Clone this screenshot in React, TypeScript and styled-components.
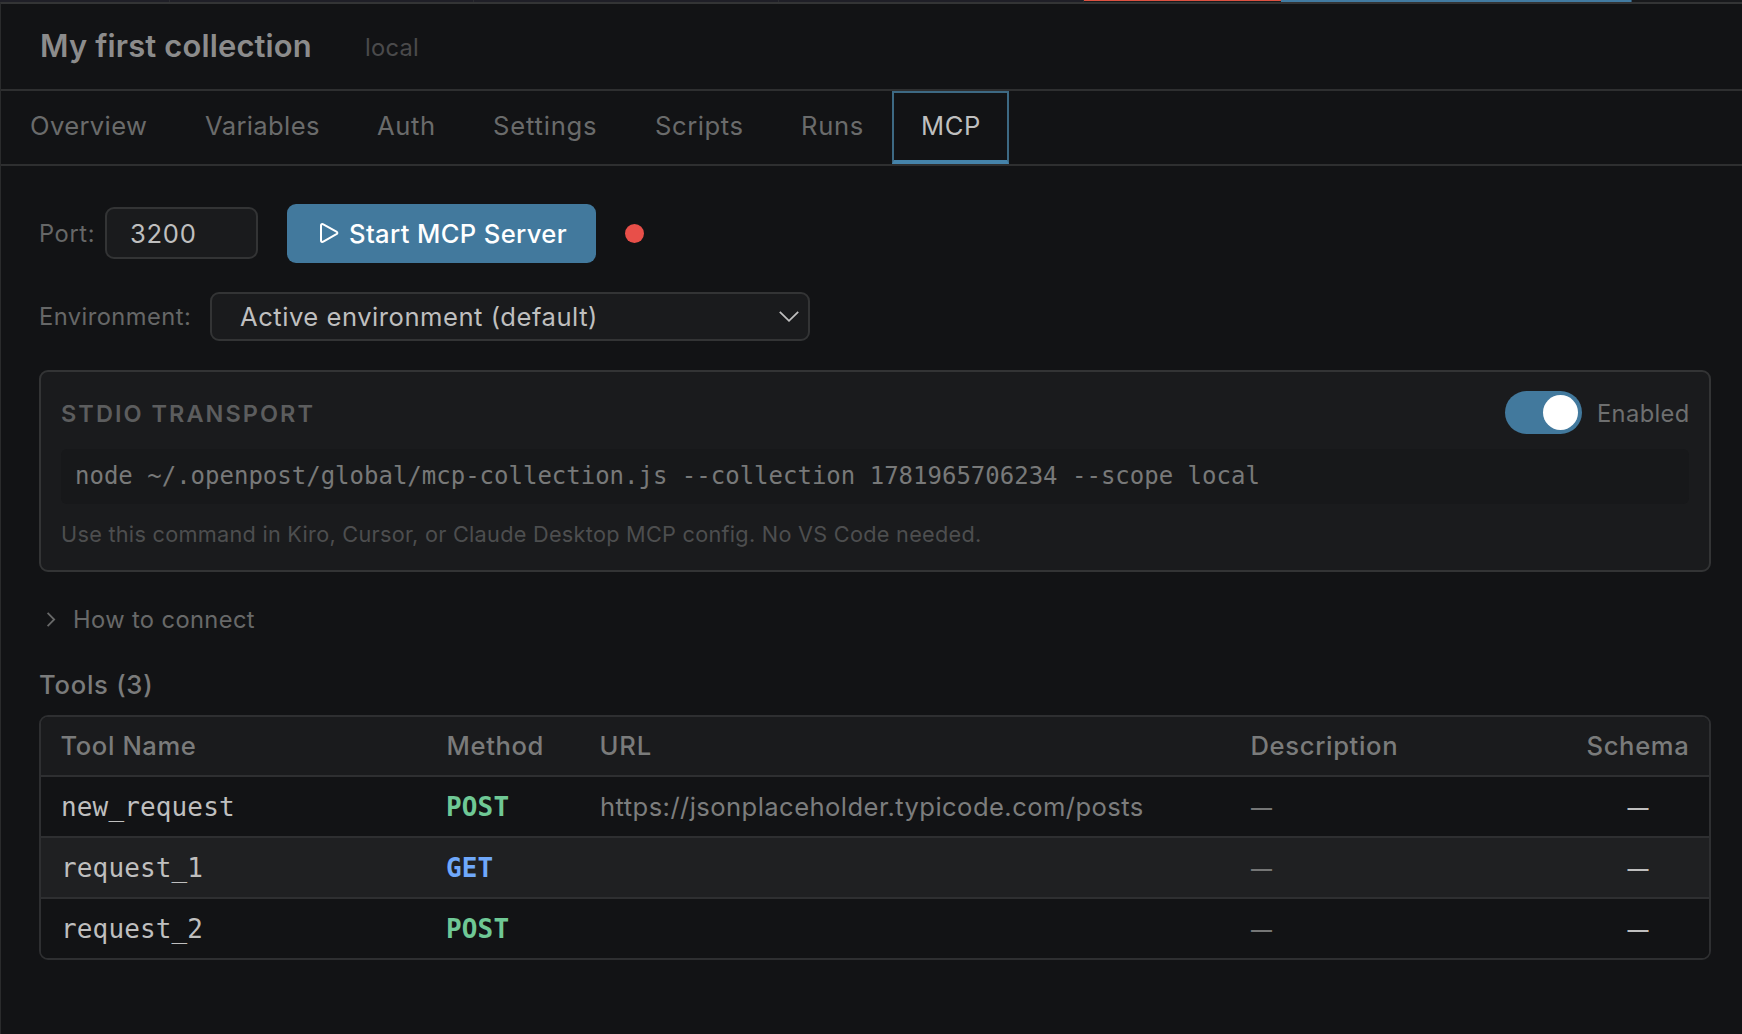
import React from "react";
import styled, { createGlobalStyle } from "styled-components";

const sans = `Inter, "Liberation Sans", sans-serif`;
const mono = `"DejaVu Sans Mono", "Liberation Mono", monospace`;

const GlobalStyle = createGlobalStyle`
  *, *::before, *::after { box-sizing: border-box; }
  body { margin: 0; background: #121315; overflow: hidden; }
`;

const Page = styled.div`
  width: 100%;
  height: 100vh;
  background: #121315;
  font-family: ${sans};
  font-size: 25.6px;
  color: #bfbfbf;
  display: flex;
  flex-direction: column;
  white-space: pre;
`;

const EditorTabs = styled.div`
  display: flex;
  height: 2px;
  flex: none;
  background: #18191c;
`;

const EditorTab = styled.div<{ $w: number }>`
  width: ${(p) => p.$w}px;
  height: 2px;
  background: #1f1f27;
  border-right: 1px solid #2b2c30;
`;

const RedTab = styled(EditorTab)`
  border-right: none;
  background: #191a1c;
  border-top: 1px solid #dd5241;
`;

const BlueTab = styled(EditorTab)`
  background: #427ba1;
  border-right: 1px solid #2f5069;
`;

const Panel = styled.div`
  flex: 1;
  display: flex;
  flex-direction: column;
  border-top: 2px solid #333435;
  border-left: 1px solid #2a2b2c;
`;

const Header = styled.header`
  display: flex;
  align-items: center;
  height: 87px;
  padding-left: 39px;
  border-bottom: 2px solid #2e2f30;
`;

const Title = styled.h1`
  margin: 0;
  width: 325px;
  padding-bottom: 2px;
  font-size: 30.9px;
  font-weight: 600;
  letter-spacing: 0.16px;
  line-height: 40px;
  color: #8c8c8c;
`;

const Scope = styled.span`
  padding-top: 2px;
  font-size: 23.7px;
  letter-spacing: 0.25px;
  line-height: 30px;
  color: #4a4a4b;
`;

const Tabs = styled.nav`
  display: flex;
  height: 75px;
  border-bottom: 2px solid #2e2f30;
`;

const Tab = styled.button<{ $w: number; $ls: number; $active?: boolean }>`
  display: flex;
  align-items: center;
  width: ${(p) => p.$w}px;
  height: 73px;
  padding: 0 0 3px 27px;
  background: transparent;
  border: 2px solid ${(p) => (p.$active ? "#3d6983" : "transparent")};
  border-bottom: 4px solid ${(p) => (p.$active ? "#4583aa" : "transparent")};
  font: 400 25.6px ${sans};
  letter-spacing: ${(p) => p.$ls}px;
  color: ${(p) => (p.$active ? "#bfbfbf" : "#6a6b6b")};
`;

const Content = styled.main`
  display: flex;
  flex-direction: column;
  padding: 38px 31px 0 38px;
`;

const FieldRow = styled.div`
  display: flex;
  align-items: center;
  margin-bottom: 29px;
`;

const Label = styled.label<{ $w: number; $ls: number }>`
  width: ${(p) => p.$w}px;
  font-size: 23.7px;
  letter-spacing: ${(p) => p.$ls}px;
  color: #666767;
`;

const PortInput = styled.input`
  width: 153px;
  height: 52px;
  margin: 0 29px 1px 0;
  padding: 0 0 0 23px;
  background: #1a1b1d;
  border: 2px solid #333435;
  border-radius: 9px;
  outline: none;
  font: 400 25.6px ${sans};
  letter-spacing: 0.7px;
  color: #bfbfbf;
`;

const StartButton = styled.button`
  display: flex;
  align-items: center;
  gap: 9px;
  width: 309px;
  height: 59px;
  padding: 0 0 0 31px;
  background: #42799d;
  border: none;
  border-radius: 9px;
  font: 500 25.6px ${sans};
  letter-spacing: 0.36px;
  color: #ffffff;
  white-space: nowrap;
`;

const StatusDot = styled.span`
  width: 19px;
  height: 19px;
  margin-left: 29px;
  border-radius: 50%;
  background: #e84f49;
`;

const Select = styled.div`
  display: flex;
  align-items: center;
  justify-content: space-between;
  width: 600px;
  height: 49px;
  padding: 0 8px 0 28px;
  background: #1a1b1d;
  border: 2px solid #333435;
  border-radius: 9px;
  letter-spacing: 0.52px;
`;

const Card = styled.section`
  height: 202px;
  padding: 19px 20px 0;
  background: #1a1b1d;
  border: 2px solid #333435;
  border-radius: 9px;
`;

const CardHead = styled.div`
  display: flex;
  align-items: center;
  height: 43px;
`;

const CardTitle = styled.h2`
  margin: 0 auto 0 0;
  padding-top: 1px;
  font-size: 23.5px;
  font-weight: 600;
  letter-spacing: 2.04px;
  color: #5c5d5e;
`;

const Toggle = styled.span`
  display: flex;
  align-items: center;
  justify-content: flex-end;
  width: 77px;
  height: 43px;
  padding-right: 4px;
  border-radius: 22px;
  background: #42799d;
`;

const Knob = styled.span`
  width: 35px;
  height: 35px;
  border-radius: 50%;
  background: #ffffff;
`;

const ToggleLabel = styled.span`
  width: 92px;
  margin-left: 15px;
  padding-top: 1px;
  font-size: 23.7px;
  letter-spacing: 0.37px;
  color: #6e6f6f;
`;

const Command = styled.code`
  display: flex;
  align-items: center;
  height: 55px;
  margin-top: 15px;
  padding: 0 0 2px 14px;
  background: #17181a;
  border-radius: 6px;
  font: 400 24px ${mono};
  color: #787979;
`;

const Hint = styled.p`
  margin: 15px 0 0;
  font-size: 21.7px;
  letter-spacing: 0.27px;
  line-height: 30px;
  color: #4d4e4f;
`;

const Disclosure = styled.div`
  display: flex;
  align-items: center;
  height: 31px;
  margin-top: 32px;
  padding-left: 7px;
  gap: 16px;
  font-size: 23.7px;
  letter-spacing: 0.38px;
  color: #686969;
`;

const ToolsTitle = styled.h3`
  margin: 33px 0 13px;
  font-size: 25.6px;
  font-weight: 500;
  letter-spacing: 0.75px;
  line-height: 34px;
  color: #7a7b7b;
`;

const Table = styled.div`
  border: 2px solid #2e2f31;
  border-radius: 9px;
  overflow: hidden;
`;

const Row = styled.div<{ $head?: boolean; $striped?: boolean }>`
  display: grid;
  grid-template-columns: 386px 153px 651px 336px 142px;
  align-items: center;
  height: ${(p) => (p.$head ? 60 : 61)}px;
  background: ${(p) => (p.$head ? "#1a1b1d" : p.$striped ? "#1f2022" : "#121315")};
  border-bottom: 2px solid #2e2f31;
  &:last-child {
    height: 59px;
    border-bottom: none;
  }
`;

const HeadCell = styled.span<{ $ls: number }>`
  padding: 0 0 2px 19.5px;
  font-weight: 500;
  letter-spacing: ${(p) => p.$ls}px;
  color: #7a7b7b;
`;

const NameCell = styled.span`
  padding-left: 20px;
  font: 400 26px ${mono};
  letter-spacing: 0.14px;
`;

const MethodCell = styled.span<{ $color: string }>`
  padding-left: 19px;
  font: 700 26px ${mono};
  letter-spacing: 0.15px;
  color: ${(p) => p.$color};
`;

const UrlCell = styled.span`
  padding-left: 20px;
  letter-spacing: 0.43px;
  color: #7c7d7d;
`;

const DashCell = styled.span<{ $center?: boolean }>`
  padding-top: 1px;
  padding-left: ${(p) => (p.$center ? 0 : 20)}px;
  text-align: ${(p) => (p.$center ? "center" : "left")};
  font-size: 21px;
  font-weight: 500;
  color: ${(p) => (p.$center ? "#bfbfbf" : "#757676")};
`;

const PlayIcon = () => (
  <svg width="22" height="24" viewBox="0 0 22 24" fill="none" stroke="#fff" strokeWidth="2" strokeLinejoin="round">
    <path d="M3 3.6 C3 2.2 4.2 1.8 5.3 2.4 L18.4 9.6 C19.7 10.4 19.7 11.4 18.4 12.2 L5.3 19.6 C4.2 20.2 3 19.8 3 18.4 Z" />
  </svg>
);

const ChevronDown = () => (
  <svg width="22" height="14" viewBox="0 0 22 14" fill="none" stroke="#bfbfbf" strokeWidth="1.8">
    <path d="M1.8 1.8 L11 10.8 L20.2 1.8" />
  </svg>
);

const ChevronRight = () => (
  <svg width="11" height="16" viewBox="0 0 11 16" fill="none" stroke="#686969" strokeWidth="1.8">
    <path d="M1.6 0.8 L8.2 7.5 L1.6 14.2" />
  </svg>
);

const tabs = [
  { label: "Overview", w: 175, ls: 0.36 },
  { label: "Variables", w: 172, ls: 0.35 },
  { label: "Auth", w: 116, ls: 0.65 },
  { label: "Settings", w: 162, ls: 0.8 },
  { label: "Scripts", w: 146, ls: 0.58 },
  { label: "Runs", w: 120, ls: 0.7 },
  { label: "MCP", w: 117, ls: 0.6, active: true },
];

const columns = [
  { label: "Tool Name", ls: 0.6 },
  { label: "Method", ls: 0.62 },
  { label: "URL", ls: 0.9 },
  { label: "Description", ls: 0.65 },
  { label: "Schema", ls: 0.65 },
];

const green = "#6fc895";
const blue = "#6fa8fb";

const tools = [
  { name: "new_request", method: "POST", color: green, url: "https://jsonplaceholder.typicode.com/posts" },
  { name: "request_1", method: "GET", color: blue, url: "" },
  { name: "request_2", method: "POST", color: green, url: "" },
];

export default function App() {
  return (
    <Page>
      <GlobalStyle />
      <EditorTabs>
        <EditorTab $w={170} />
        <EditorTab $w={304} />
        <EditorTab $w={305} />
        <EditorTab $w={305} />
        <RedTab $w={197} />
        <BlueTab $w={351} />
      </EditorTabs>
      <Panel>
        <Header>
          <Title>My first collection</Title>
          <Scope>local</Scope>
        </Header>
        <Tabs>
          {tabs.map((t) => (
            <Tab key={t.label} $w={t.w} $ls={t.ls} $active={t.active}>
              {t.label}
            </Tab>
          ))}
        </Tabs>
        <Content>
          <FieldRow>
            <Label $w={66} $ls={0.6}>Port:</Label>
            <PortInput defaultValue="3200" />
            <StartButton>
              <PlayIcon />
              Start MCP Server
            </StartButton>
            <StatusDot />
          </FieldRow>
          <FieldRow>
            <Label $w={171} $ls={0.45}>Environment:</Label>
            <Select>
              Active environment (default)
              <ChevronDown />
            </Select>
          </FieldRow>
          <Card>
            <CardHead>
              <CardTitle>STDIO TRANSPORT</CardTitle>
              <Toggle>
                <Knob />
              </Toggle>
              <ToggleLabel>Enabled</ToggleLabel>
            </CardHead>
            <Command>node ~/.openpost/global/mcp-collection.js --collection 1781965706234 --scope local</Command>
            <Hint>Use this command in Kiro, Cursor, or Claude Desktop MCP config. No VS Code needed.</Hint>
          </Card>
          <Disclosure>
            <ChevronRight />
            How to connect
          </Disclosure>
          <ToolsTitle>Tools (3)</ToolsTitle>
          <Table>
            <Row $head>
              {columns.map((c) => (
                <HeadCell key={c.label} $ls={c.ls}>{c.label}</HeadCell>
              ))}
            </Row>
            {tools.map((t, i) => (
              <Row key={t.name} $striped={i === 1}>
                <NameCell>{t.name}</NameCell>
                <MethodCell $color={t.color}>{t.method}</MethodCell>
                <UrlCell>{t.url}</UrlCell>
                <DashCell>—</DashCell>
                <DashCell $center>—</DashCell>
              </Row>
            ))}
          </Table>
        </Content>
      </Panel>
    </Page>
  );
}
